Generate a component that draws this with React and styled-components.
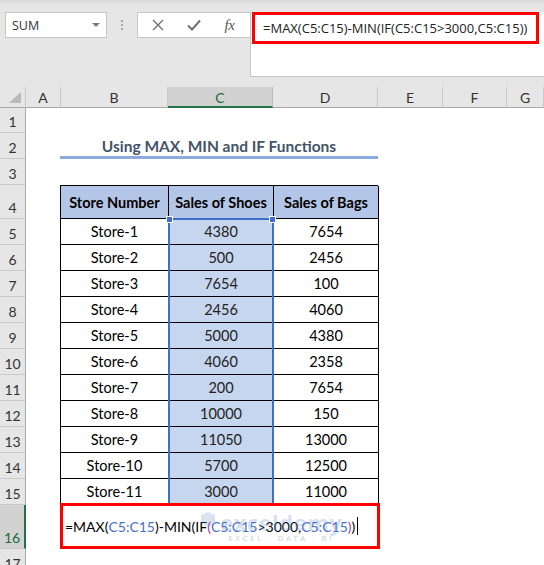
import React from 'react'
import styled, { createGlobalStyle } from 'styled-components'

const GlobalStyle = createGlobalStyle`
  html, body { margin: 0; padding: 0; background: #fff; overflow: hidden; }
  * { box-sizing: border-box; }
`

const Window = styled.div`
  width: 544px;
  height: 565px;
  overflow: hidden;
  display: flex;
  flex-direction: column;
  background: #fff;
`

/* ---------- formula bar area ---------- */
const TopArea = styled.div`
  height: 87px;
  flex: none;
  display: flex;
  align-items: flex-start;
  padding-top: 12px;
  background: linear-gradient(#dadada 0px, #e3e3e3 4px, #e6e6e6 8px);
`
const NameBox = styled.div`
  margin-left: 5px;
  width: 102px;
  height: 26px;
  background: #fff;
  border: 1px solid #c6c6c6;
  display: flex;
  align-items: center;
  justify-content: space-between;
  padding: 0 6px 0 6px;
  font-family: "Open Sans", "Noto Sans", sans-serif;
  font-size: 12.5px;
  color: #333;
`
const Caret = styled.span`
  width: 0;
  height: 0;
  border-left: 4px solid transparent;
  border-right: 4px solid transparent;
  border-top: 4px solid #7a7a7a;
`
const Dots = styled.div`
  width: 30px;
  height: 26px;
  display: flex;
  flex-direction: column;
  align-items: center;
  justify-content: center;
  gap: 2px;
  span {
    width: 2px;
    height: 2px;
    background: #a8a8a8;
  }
`
const FxBox = styled.div`
  width: 113px;
  height: 26px;
  background: #fff;
  border: 1px solid #c6c6c6;
  border-right: none;
  display: flex;
  align-items: center;
  justify-content: space-around;
  padding: 0 4px 0 2px;
  color: #6e6e6e;
`
const FxText = styled.span`
  font-family: "Liberation Serif", serif;
  font-style: italic;
  font-size: 15px;
  color: #555;
  letter-spacing: -0.5px;
`
const FormulaBar = styled.div`
  flex: 1;
  height: 65px;
  background: #fff;
  border-left: 1px solid #c6c6c6;
  border-bottom: 1px solid #c6c6c6;
  padding: 0 5px 0 1px;
`
const RedBox = styled.div`
  height: 32px;
  border: 3px solid #ff0000;
  display: flex;
  align-items: center;
  padding-left: 8px;
  font-family: "Open Sans", "Noto Sans", sans-serif;
  font-size: 13px;
  color: #222;
  white-space: nowrap;
`

/* ---------- sheet ---------- */
const Sheet = styled.div`
  flex: 1;
  display: grid;
  grid-template-columns: 26px 35px 107px 105px 105px 65px 64px 1fr;
  grid-template-rows: 21px 25px 26px 26px 34px repeat(11, 26px) 44px 26px;
  font-family: Lato, "Liberation Sans", sans-serif;
`
const ColHead = styled.div`
  grid-row: 1;
  background: ${p => (p.$active ? '#d2d2d2' : '#e6e6e6')};
  border-right: 1px solid ${p => (p.$active ? '#bcbcbc' : '#c8c8c8')};
  border-bottom: ${p => (p.$active ? '2px solid #217346' : '1px solid #a9a9a9')};
  color: ${p => (p.$active ? '#1e6b41' : '#333')};
  display: flex;
  align-items: center;
  justify-content: center;
  font-size: 14px;
  padding-top: 1px;
`
const Corner = styled.div`
  grid-row: 1;
  grid-column: 1;
  background: #e6e6e6;
  border-right: 1px solid #c8c8c8;
  border-bottom: 1px solid #a9a9a9;
  display: flex;
  align-items: flex-end;
  justify-content: flex-end;
  padding: 0 4px 4px 0;
`
const CornerTri = styled.span`
  width: 0;
  height: 0;
  border-left: 12px solid transparent;
  border-bottom: 11px solid #b8b8b8;
`
const RowHead = styled.div`
  grid-column: 1;
  grid-row: ${p => p.$row};
  background: ${p => (p.$active ? '#d2d2d2' : '#e6e6e6')};
  border-bottom: 1px solid #c8c8c8;
  border-right: ${p => (p.$active ? '2px solid #217346' : '1px solid #a9a9a9')};
  color: ${p => (p.$active ? '#1e6b41' : '#333')};
  display: flex;
  align-items: flex-end;
  justify-content: center;
  padding-bottom: 2px;
  font-size: 14px;
`
const Title = styled.div`
  grid-column: 3 / 6;
  grid-row: 3;
  margin-left: -1px;
  border-bottom: 3px solid #8eaadb;
  display: flex;
  align-items: center;
  justify-content: center;
  padding-top: 3px;
  font-weight: 700;
  font-size: 15.5px;
  color: #44546a;
`
const Table = styled.div`
  grid-column: 3 / 6;
  grid-row: 5 / 17;
  margin-left: -1px;
  display: grid;
  grid-template-columns: 108px 105px 105px;
  grid-template-rows: 33px repeat(11, 26px);
  border-left: 1px solid #000;
  border-top: 1px solid #000;
`
const Cell = styled.div`
  grid-row: ${p => p.$row};
  grid-column: ${p => p.$col};
  border-right: 1px solid #000;
  border-bottom: 1px solid #000;
  background: ${p => (p.$head ? '#b4c6e7' : p.$sel ? '#c6d6ef' : '#fff')};
  font-weight: ${p => (p.$head ? 700 : 400)};
  color: ${p => (p.$sel ? '#222' : '#000')};
  font-size: 14.5px;
  display: flex;
  align-items: center;
  justify-content: center;
  white-space: nowrap;
`
const RangeBox = styled.div`
  grid-column: 2;
  grid-row: 2 / 13;
  position: relative;
  margin: -1px 0 -1px -1px;
  border: 2px solid #3f6fc8;
  border-bottom: none;
  pointer-events: none;
`
const Handle = styled.span`
  position: absolute;
  top: -4px;
  ${p => (p.$right ? 'right: -4px;' : 'left: -4px;')}
  width: 7px;
  height: 7px;
  background: #3f6fc8;
  border: 1px solid #fff;
`
const EditCell = styled.div`
  grid-column: 3 / 6;
  grid-row: 17;
  position: relative;
  margin: -2px -2px 0 -1px;
  border: 3px solid #ff0000;
  display: flex;
  align-items: center;
  padding-left: 2px;
  font-size: 14px;
  color: #000;
  white-space: nowrap;
  overflow: hidden;
`
const Ref = styled.span`
  color: ${p => p.$c};
`
const Caret1 = styled.span`
  display: inline-block;
  width: 1px;
  height: 18px;
  margin-left: 2px;
  background: #000;
`
const Watermark = styled.div`
  position: absolute;
  left: 136px;
  top: 5px;
  display: flex;
  align-items: flex-start;
  gap: 3px;
  pointer-events: none;
`
const WmText = styled.div`
  display: flex;
  flex-direction: column;
  align-items: center;
  line-height: 1;
`
const WmBig = styled.span`
  font-family: "Open Sans", sans-serif;
  font-weight: 700;
  font-size: 22px;
  letter-spacing: 0.5px;
  color: rgba(110, 145, 205, 0.28);
`
const WmSmall = styled.span`
  margin-top: 1px;
  font-family: "Open Sans", sans-serif;
  font-size: 8px;
  letter-spacing: 2.5px;
  color: rgba(110, 125, 150, 0.4);
`

const rows = [
  ['Store-1', 4380, 7654],
  ['Store-2', 500, 2456],
  ['Store-3', 7654, 100],
  ['Store-4', 2456, 4060],
  ['Store-5', 5000, 4380],
  ['Store-6', 4060, 2358],
  ['Store-7', 200, 7654],
  ['Store-8', 10000, 150],
  ['Store-9', 11050, 13000],
  ['Store-10', 5700, 12500],
  ['Store-11', 3000, 11000],
]

const cols = ['A', 'B', 'C', 'D', 'E', 'F', 'G']
const BLUE = '#4a72c4'
const PURPLE = '#9a3b94'

const App = () => {
  return (
    <Window>
      <GlobalStyle />
      <TopArea>
        <NameBox>
          SUM
          <Caret />
        </NameBox>
        <Dots><span /><span /><span /></Dots>
        <FxBox>
          <svg width="12" height="12" viewBox="0 0 12 12">
            <path d="M1 1L11 11M11 1L1 11" stroke="#707070" strokeWidth="1.4" fill="none" />
          </svg>
          <svg width="14" height="12" viewBox="0 0 14 12">
            <path d="M1 6.5L5 10.5L13 1.5" stroke="#707070" strokeWidth="2" fill="none" />
          </svg>
          <FxText>fx</FxText>
        </FxBox>
        <FormulaBar>
          <RedBox>=MAX(C5:C15)-MIN(IF(C5:C15&gt;3000,C5:C15))</RedBox>
        </FormulaBar>
      </TopArea>

      <Sheet>
        <Corner><CornerTri /></Corner>
        {cols.map(c => (
          <ColHead key={c} $active={c === 'C'}>{c}</ColHead>
        ))}
        {Array.from({ length: 16 }, (_, i) => (
          <RowHead key={i} $row={i + 2} $active={i === 15}>{i + 1}</RowHead>
        ))}
        <RowHead $row={18}>17</RowHead>

        <Title>Using MAX, MIN and IF Functions</Title>

        <Table>
          <Cell $row={1} $col={1} $head>Store Number</Cell>
          <Cell $row={1} $col={2} $head>Sales of Shoes</Cell>
          <Cell $row={1} $col={3} $head>Sales of Bags</Cell>
          {rows.map((r, i) => (
            <React.Fragment key={r[0]}>
              <Cell $row={i + 2} $col={1}>{r[0]}</Cell>
              <Cell $row={i + 2} $col={2} $sel>{r[1]}</Cell>
              <Cell $row={i + 2} $col={3}>{r[2]}</Cell>
            </React.Fragment>
          ))}
          <RangeBox>
            <Handle />
            <Handle $right />
          </RangeBox>
        </Table>

        <EditCell>
          =MAX(<Ref $c={BLUE}>C5:C15</Ref>)-MIN(IF<Ref $c={PURPLE}>(</Ref>
          <Ref $c={BLUE}>C5:C15</Ref>&gt;3000,<Ref $c={BLUE}>C5:C15</Ref>
          <Ref $c={PURPLE}>)</Ref>)
          <Caret1 />
          <Watermark>
            <svg width="18" height="22" viewBox="0 0 18 22">
              <path d="M2 4L9 1L16 4V12L9 16L2 12Z" fill="rgba(110,145,205,0.25)" />
            </svg>
            <WmText>
              <WmBig>exceldemy</WmBig>
              <WmSmall>EXCEL · DATA · BI</WmSmall>
            </WmText>
          </Watermark>
        </EditCell>
      </Sheet>
    </Window>
  )
}

export default App
